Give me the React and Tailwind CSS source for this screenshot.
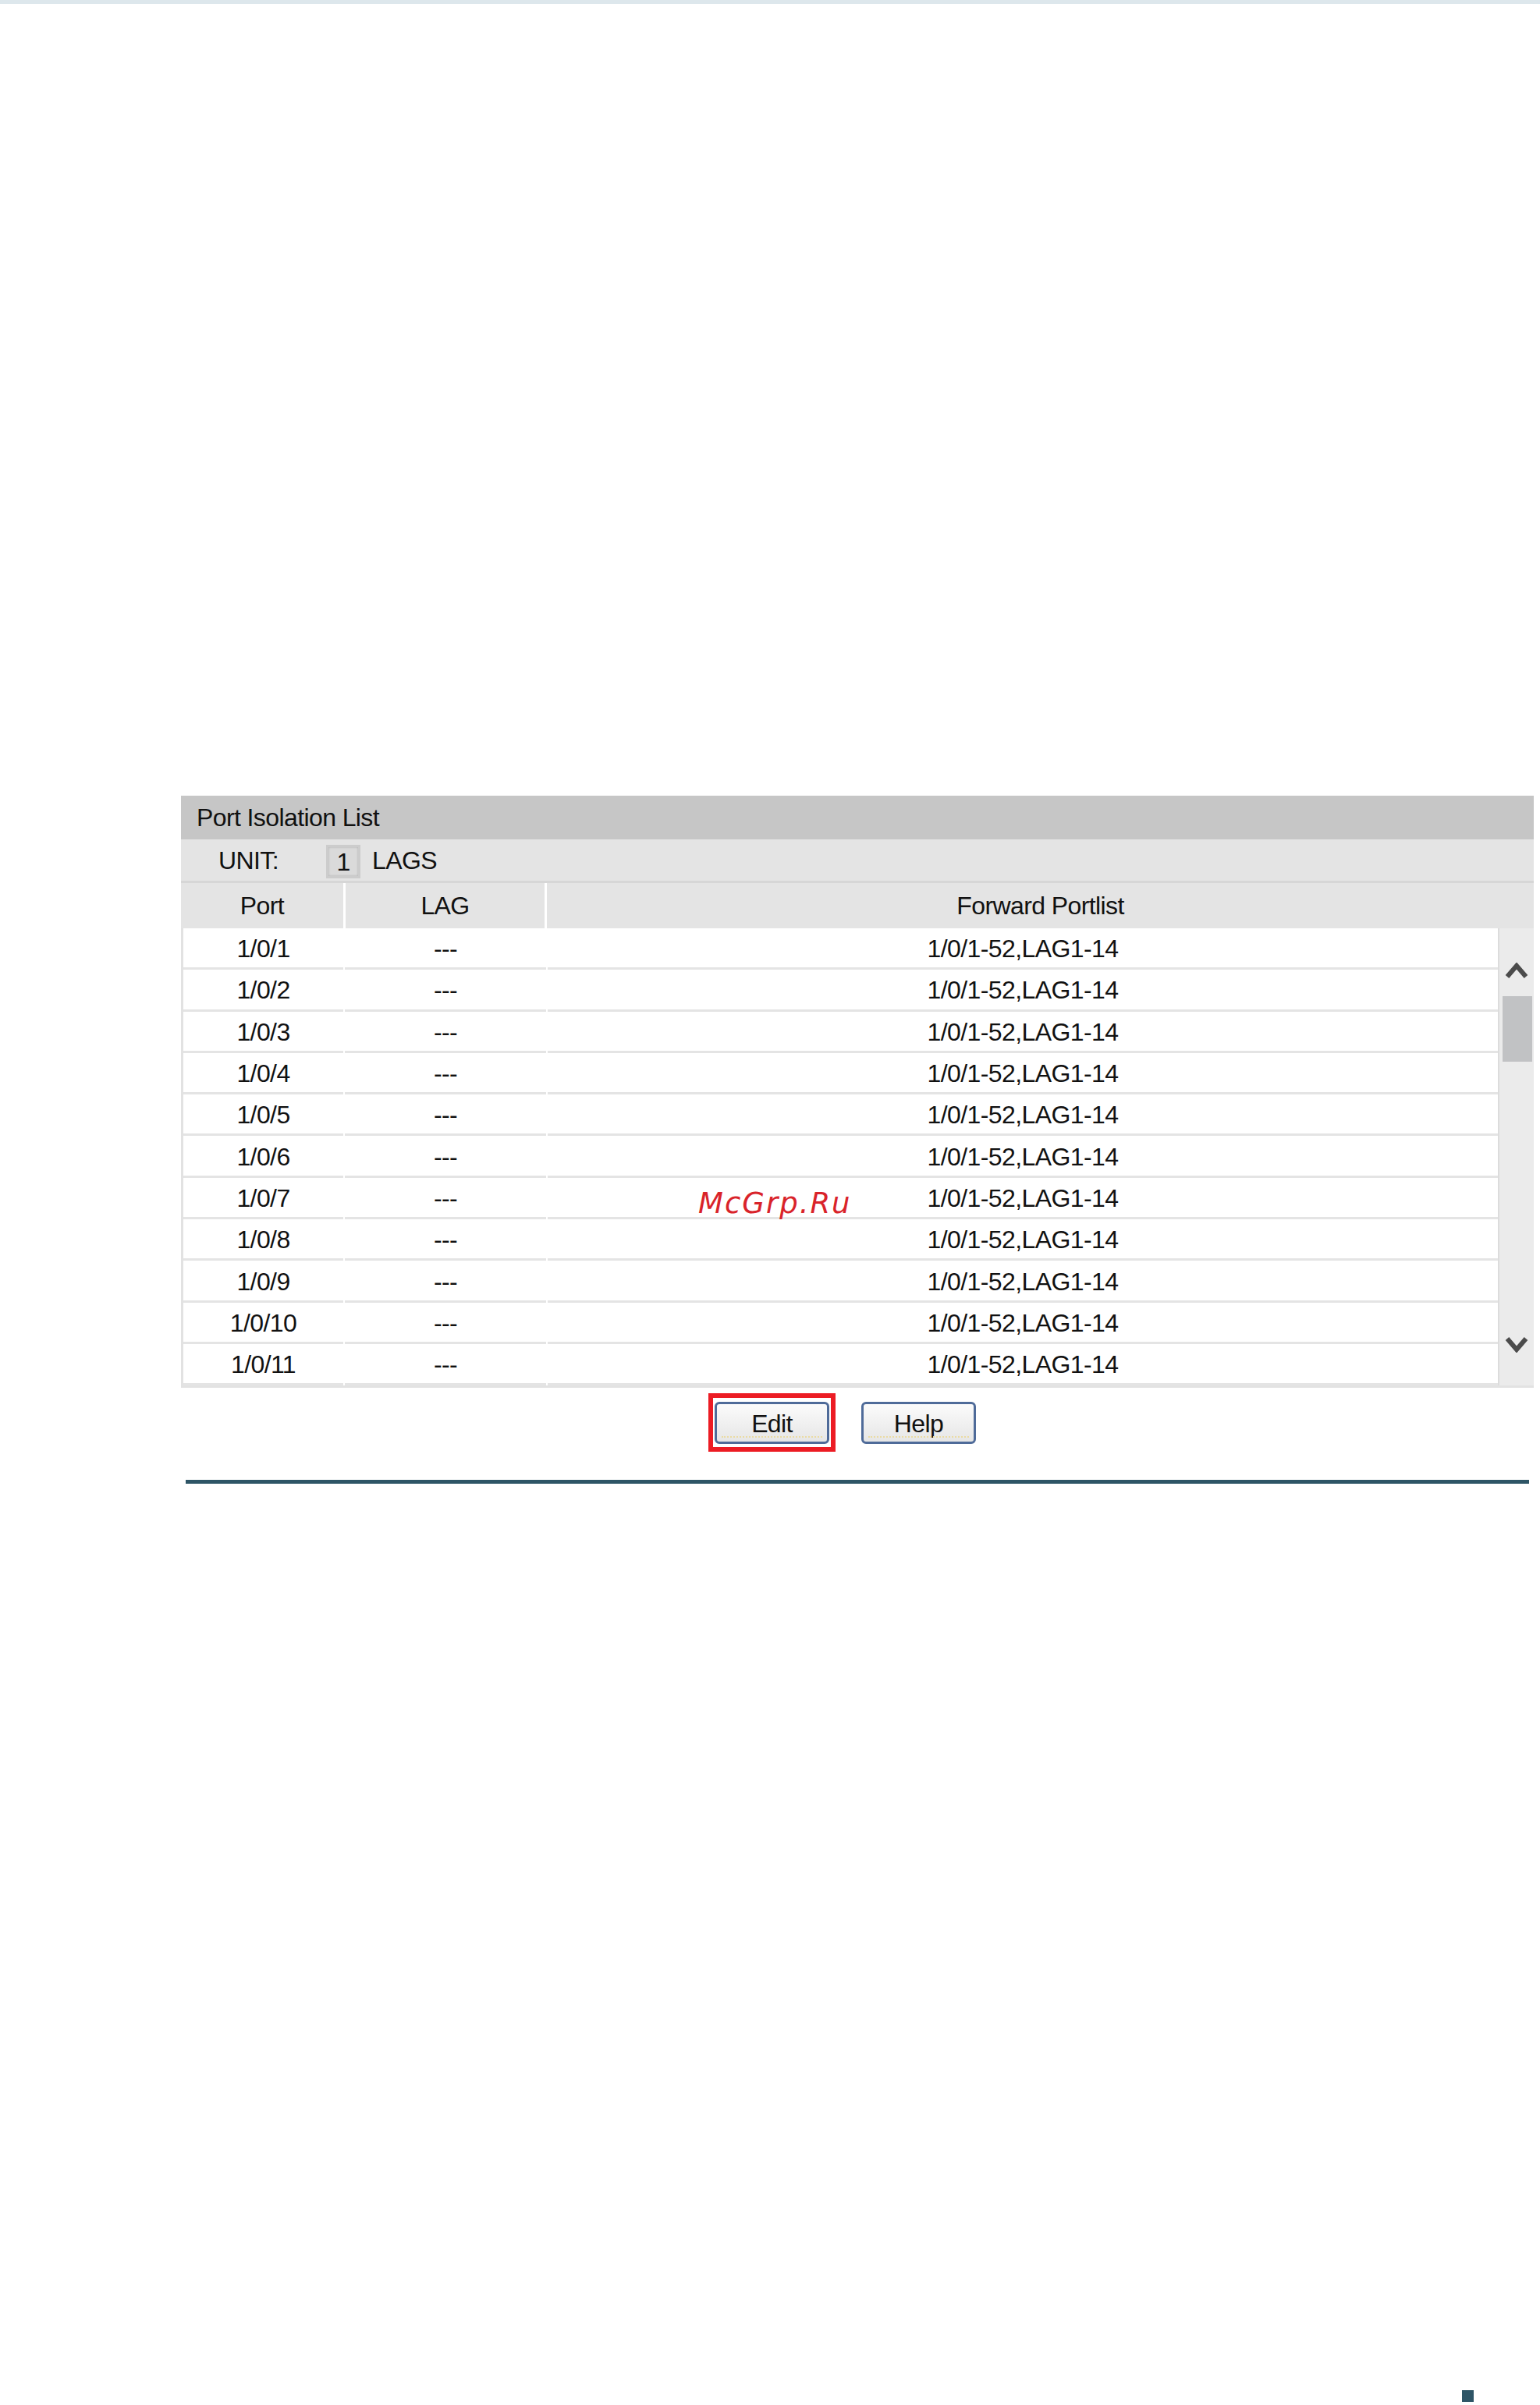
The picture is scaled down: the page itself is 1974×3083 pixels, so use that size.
import React from "react";

const ports = ["1/0/1", "1/0/2", "1/0/3", "1/0/4", "1/0/5", "1/0/6", "1/0/7", "1/0/8", "1/0/9", "1/0/10", "1/0/11"];

function Chevron({ down }) {
  return (
    <svg width="30" height="22" viewBox="0 0 30 22" className="block">
      <polyline
        points={down ? "3,4 15,18 27,4" : "3,18 15,4 27,18"}
        fill="none"
        stroke="#4b4b4b"
        strokeWidth="6"
        strokeLinejoin="miter"
      />
    </svg>
  );
}

function Btn({ label }) {
  return (
    <button className="w-[147px] h-[54px] rounded-[6px] border-[3px] border-[#4f6b99] bg-gradient-to-b from-[#fbfbfb] to-[#e6e6e6] flex flex-col items-center justify-center relative">
      <span className="mt-[2px]">{label}</span>
      <span className="absolute left-[6px] right-[6px] bottom-[5px] border-b-2 border-dotted border-[#eadca4]"></span>
    </button>
  );
}

export default function App() {
  return (
    <div className="w-[1974px] h-[3083px] bg-white relative text-[32px] tracking-[-0.6px] text-[#111111]" style={{ fontFamily: '"Liberation Sans", Arial, sans-serif' }}>
      <div className="h-[5px] bg-[#dde7ec]"></div>

      {/* port isolation table */}
      <div className="mt-[1015px] ml-[232px] w-[1734px]">
        <div className="h-[56px] bg-[#c6c6c6] flex items-center pl-[20px]">Port Isolation List</div>
        <div className="h-[56px] bg-[#e4e4e4] border-b-[3px] border-[#d6d6d6] flex items-center pl-[48px]">
          <span className="w-[138px]">UNIT:</span>
          <span className="w-[44px] h-[43px] bg-[#cccccc] p-[3px] mt-[4px]">
            <span className="w-full h-full bg-[#dadada] shadow-[inset_0_0_3px_rgba(0,0,0,0.2)] flex items-center justify-center">1</span>
          </span>
          <span className="ml-[15px]">LAGS</span>
        </div>
        <div className="h-[58px] bg-[#e4e4e4] grid grid-cols-[208px_258px_1fr]">
          <div className="flex items-center justify-center">Port</div>
          <div className="flex items-center justify-center border-l-[3px] border-white">LAG</div>
          <div className="flex items-center justify-center border-l-[3px] border-white">Forward Portlist</div>
        </div>

        <div className="flex border-l-[3px] border-b-[3px] border-[#e2e2e2]">
          <div className="w-[1685px]">
            {ports.map((p) => (
              <div key={p} className="h-[53.3px] grid grid-cols-[205px_258px_1fr] gap-x-[2px]">
                <div className="flex items-center justify-center border-b-[3px] border-[#e4e4e4] pt-[2px]">{p}</div>
                <div className="flex items-center justify-center border-b-[3px] border-[#e4e4e4] pt-[2px]">---</div>
                <div className="flex items-center justify-center border-b-[3px] border-[#e4e4e4] pt-[2px]">1/0/1-52,LAG1-14</div>
              </div>
            ))}
          </div>
          <div className="w-[46px] bg-[#ebebeb] border-l-[2px] border-[#dcdcdc] flex flex-col items-center pt-[44px] pb-[42px]">
            <Chevron />
            <div className="mt-[21px] w-[38px] h-[84px] bg-[#c1c2c4] ml-[2px]"></div>
            <div className="flex-1"></div>
            <Chevron down />
          </div>
        </div>

        <div className="mt-[7px] flex items-start">
          <div className="ml-[676px] border-[6px] border-[#ec1c24] pt-[5px] pb-[4px] px-[2px]">
            <Btn label="Edit" />
          </div>
          <div className="ml-[33px] mt-[11px]">
            <Btn label="Help" />
          </div>
        </div>
      </div>

      <div className="mt-[36px] ml-[238px] w-[1722px] h-[5px] bg-[#2e5566]"></div>

      <div className="mt-[1162px] ml-[1874px] w-[15px] h-[15px] bg-[#2e5566]"></div>

      {/* watermark over the table */}
      <div className="absolute left-[895px] top-[1524px] text-[37px] leading-none italic tracking-[2px] text-[#d9232a]" style={{ fontFamily: '"DejaVu Sans", sans-serif' }}>
        McGrp.Ru
      </div>
    </div>
  );
}
